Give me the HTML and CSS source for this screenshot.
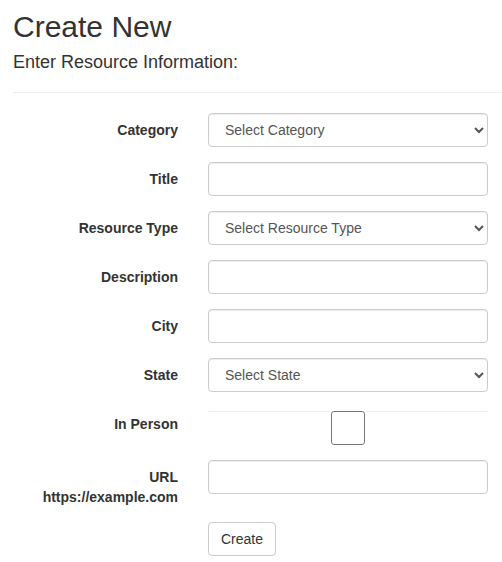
FILE: index.html
```html
<!DOCTYPE html>
<html lang="en">
<head>
<meta charset="utf-8">
<title>Create New</title>
<link rel="stylesheet" href="styles.css">
</head>
<body>
<div class="page">
  <h2 class="title">Create New</h2>
  <h4 class="subtitle">Enter Resource Information:</h4>
  <hr class="divider">
  <form class="form">
    <div class="group">
      <label class="label" for="cat">Category</label>
      <div class="field">
        <select id="cat" class="control select"><option>Select Category</option></select>
      </div>
    </div>
    <div class="group">
      <label class="label" for="title">Title</label>
      <div class="field"><input id="title" class="control" type="text"></div>
    </div>
    <div class="group">
      <label class="label" for="rtype">Resource Type</label>
      <div class="field">
        <select id="rtype" class="control select"><option>Select Resource Type</option></select>
      </div>
    </div>
    <div class="group">
      <label class="label" for="desc">Description</label>
      <div class="field"><input id="desc" class="control" type="text"></div>
    </div>
    <div class="group">
      <label class="label" for="city">City</label>
      <div class="field"><input id="city" class="control" type="text"></div>
    </div>
    <div class="group">
      <label class="label" for="state">State</label>
      <div class="field">
        <select id="state" class="control select"><option>Select State</option></select>
      </div>
    </div>
    <div class="group">
      <label class="label" for="inperson">In Person</label>
      <div class="field">
        <div class="check-wrap"><span class="check-box" id="inperson"></span></div>
      </div>
    </div>
    <div class="group">
      <label class="label" for="url">URL<br>https://example.com</label>
      <div class="field"><input id="url" class="control" type="text"></div>
    </div>
    <div class="group">
      <div class="label"></div>
      <div class="field"><button type="button" class="btn">Create</button></div>
    </div>
  </form>
</div>
</body>
</html>
```

FILE: styles.css
```css
* { box-sizing: border-box; }
html, body {
  margin: 0;
  padding: 0;
  background: #fff;
}
body {
  font-family: "Liberation Sans", Arial, Helvetica, sans-serif;
  font-size: 14px;
  line-height: 20px;
  color: #333;
}
.page {
  padding: 10px 0 0 13px;
}
.title {
  font-size: 30px;
  line-height: 33px;
  font-weight: 500;
  margin: 0 0 9px;
}
.subtitle {
  font-size: 18px;
  line-height: 20px;
  font-weight: 500;
  margin: 0;
}
.divider {
  border: 0;
  border-top: 1px solid #eee;
  margin: 20px 0 20px;
  height: 0;
}
.form {
  margin: 0;
}
.group {
  display: flex;
  align-items: flex-start;
  margin-bottom: 15px;
}
.label {
  width: 180px;
  flex: none;
  padding: 7px 15px 0 0;
  text-align: right;
  font-weight: 700;
}
.field {
  padding-left: 15px;
  width: 295px;
  flex: none;
}
.control {
  display: block;
  width: 280px;
  height: 34px;
  padding: 6px 12px;
  font-family: inherit;
  font-size: 14px;
  line-height: 20px;
  color: #555;
  background: #fff;
  border: 1px solid #ccc;
  border-radius: 4px;
  box-shadow: inset 0 1px 1px rgba(0,0,0,.075);
  margin: 0;
}
.check-wrap {
  margin-top: 4px;
  width: 280px;
  height: 34px;
  padding-left: 123px;
  box-shadow: inset 0 1px 1px rgba(0,0,0,.075);
  display: flex;
  align-items: flex-start;
}
.check-box {
  display: block;
  width: 34px;
  height: 34px;
  border: 1px solid #767676;
  border-radius: 3px;
  background: #fff;
}
.btn {
  display: inline-block;
  padding: 6px 12px;
  font-family: inherit;
  font-size: 14px;
  line-height: 20px;
  color: #333;
  background: #fff;
  border: 1px solid #ccc;
  border-radius: 4px;
  margin: 0;
}
```
